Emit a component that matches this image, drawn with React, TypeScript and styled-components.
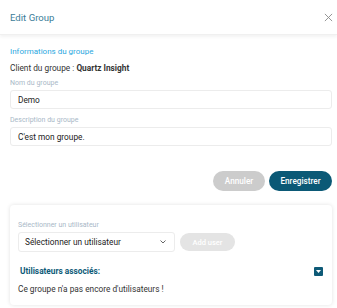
import styled, { createGlobalStyle } from 'styled-components';

const GlobalStyle = createGlobalStyle`
    body {
        margin: 0;
        background: #ffffff;
        font-family: Roboto, 'Liberation Sans', sans-serif;
        color: #333;
    }
`;

const Modal = styled.div`
    width: 337px;
    height: 308px;
    display: flex;
    flex-direction: column;
    background: #ffffff;
    overflow: hidden;
`;

const Header = styled.div`
    height: 35px;
    flex-shrink: 0;
    display: flex;
    align-items: center;
    justify-content: space-between;
    padding: 0 4px 0 10px;
    box-shadow: 0 2px 3px rgba(0, 0, 0, 0.05);
    border-bottom: 1px solid #f0f0f0;
    box-sizing: border-box;
`;

const Title = styled.h3`
    margin: 0;
    font-size: 9.6px;
    font-weight: 400;
    color: #3b7d99;
`;

const CloseButton = styled.button`
    all: unset;
    display: flex;
    color: #8a8a8a;
`;

const Body = styled.div`
    padding: 12px 5px 0 10px;
    display: flex;
    flex-direction: column;
`;

const SectionTitle = styled.div`
    font-size: 8px;
    line-height: 10px;
    color: #2ba8e0;
    margin-bottom: 6px;
`;

const Client = styled.div`
    font-size: 8.3px;
    line-height: 10px;
    color: #333;
    margin-bottom: 6px;

    & b {
        font-weight: 700;
    }
`;

const Label = styled.label`
    font-size: 7px;
    line-height: 8px;
    color: #a9b8c7;
    margin-bottom: 3px;
`;

const Input = styled.div<{ $mb: number }>`
    height: 19px;
    border: 1px solid #ececec;
    border-radius: 3px;
    padding: 0 7px;
    display: flex;
    align-items: center;
    font-size: 8.3px;
    color: #222;
    box-sizing: border-box;
    margin-bottom: ${(p) => p.$mb}px;
`;

const Actions = styled.div`
    display: flex;
    justify-content: flex-end;
    gap: 4px;
    margin-bottom: 14px;
`;

const Pill = styled.button<{ $primary?: boolean }>`
    all: unset;
    height: 20px;
    width: ${(p) => (p.$primary ? 63 : 52)}px;
    border-radius: 10px;
    font-size: 8.2px;
    font-weight: 500;
    display: flex;
    align-items: center;
    justify-content: center;
    color: #ffffff;
    background: ${(p) => (p.$primary ? '#0b5976' : '#cccccc')};
`;

const Card = styled.div`
    border-radius: 4px;
    box-shadow: 0 0 4px rgba(0, 0, 0, 0.12);
    padding: 16px 8px 11px 8px;
    display: flex;
    flex-direction: column;
`;

const Row = styled.div`
    display: flex;
    align-items: center;
    gap: 5px;
    margin-bottom: 14px;
`;

const Select = styled.div`
    width: 157px;
    height: 20px;
    border: 1px solid #ececec;
    border-radius: 3px;
    box-sizing: border-box;
    padding: 0 8px 0 6px;
    display: flex;
    align-items: center;
    justify-content: space-between;
    font-size: 8.3px;
    color: #222;
`;

const AddButton = styled.button`
    all: unset;
    height: 18px;
    width: 55px;
    border-radius: 9px;
    background: #e4e4e4;
    color: #ffffff;
    font-size: 7.5px;
    font-weight: 500;
    display: flex;
    align-items: center;
    justify-content: center;
`;

const AssocRow = styled.div`
    display: flex;
    align-items: center;
    justify-content: space-between;
    line-height: 10px;
    padding: 0 1px 0 2px;
    margin-bottom: 8px;
`;

const AssocTitle = styled.div`
    font-size: 8.3px;
    font-weight: 700;
    color: #0e5a77;
`;

const Toggle = styled.span`
    width: 9px;
    height: 9px;
    background: #0e5a77;
    border-radius: 1px;
    display: flex;
    align-items: center;
    justify-content: center;
`;

const Empty = styled.div`
    font-size: 8.3px;
    line-height: 10px;
    color: #333;
`;

export default function App() {
    return (
        <>
            <GlobalStyle />
            <Modal>
                <Header>
                    <Title>Edit Group</Title>
                    <CloseButton>
                        <svg width="9" height="9" viewBox="0 0 10 10">
                            <path d="M1 1L9 9M9 1L1 9" stroke="#8a8a8a" strokeWidth="1" />
                        </svg>
                    </CloseButton>
                </Header>
                <Body>
                    <SectionTitle>Informations du groupe</SectionTitle>
                    <Client>
                        Client du groupe : <b>Quartz Insight</b>
                    </Client>
                    <Label>Nom du groupe</Label>
                    <Input $mb={7}>Demo</Input>
                    <Label>Description du groupe</Label>
                    <Input $mb={25}>C'est mon groupe.</Input>
                    <Actions>
                        <Pill>Annuler</Pill>
                        <Pill $primary>Enregistrer</Pill>
                    </Actions>
                    <Card>
                        <Label>Sélectionner un utilisateur</Label>
                        <Row>
                            <Select>
                                Sélectionner un utilisateur
                                <svg width="6" height="4" viewBox="0 0 6 4">
                                    <path d="M0.5 0.5L3 3L5.5 0.5" stroke="#555" fill="none" strokeWidth="0.9" />
                                </svg>
                            </Select>
                            <AddButton>Add user</AddButton>
                        </Row>
                        <AssocRow>
                            <AssocTitle>Utilisateurs associés:</AssocTitle>
                            <Toggle>
                                <svg width="5" height="3" viewBox="0 0 5 3">
                                    <path d="M0 0H5L2.5 3Z" fill="#ffffff" />
                                </svg>
                            </Toggle>
                        </AssocRow>
                        <Empty>Ce groupe n'a pas encore d'utilisateurs !</Empty>
                    </Card>
                </Body>
            </Modal>
        </>
    );
}
